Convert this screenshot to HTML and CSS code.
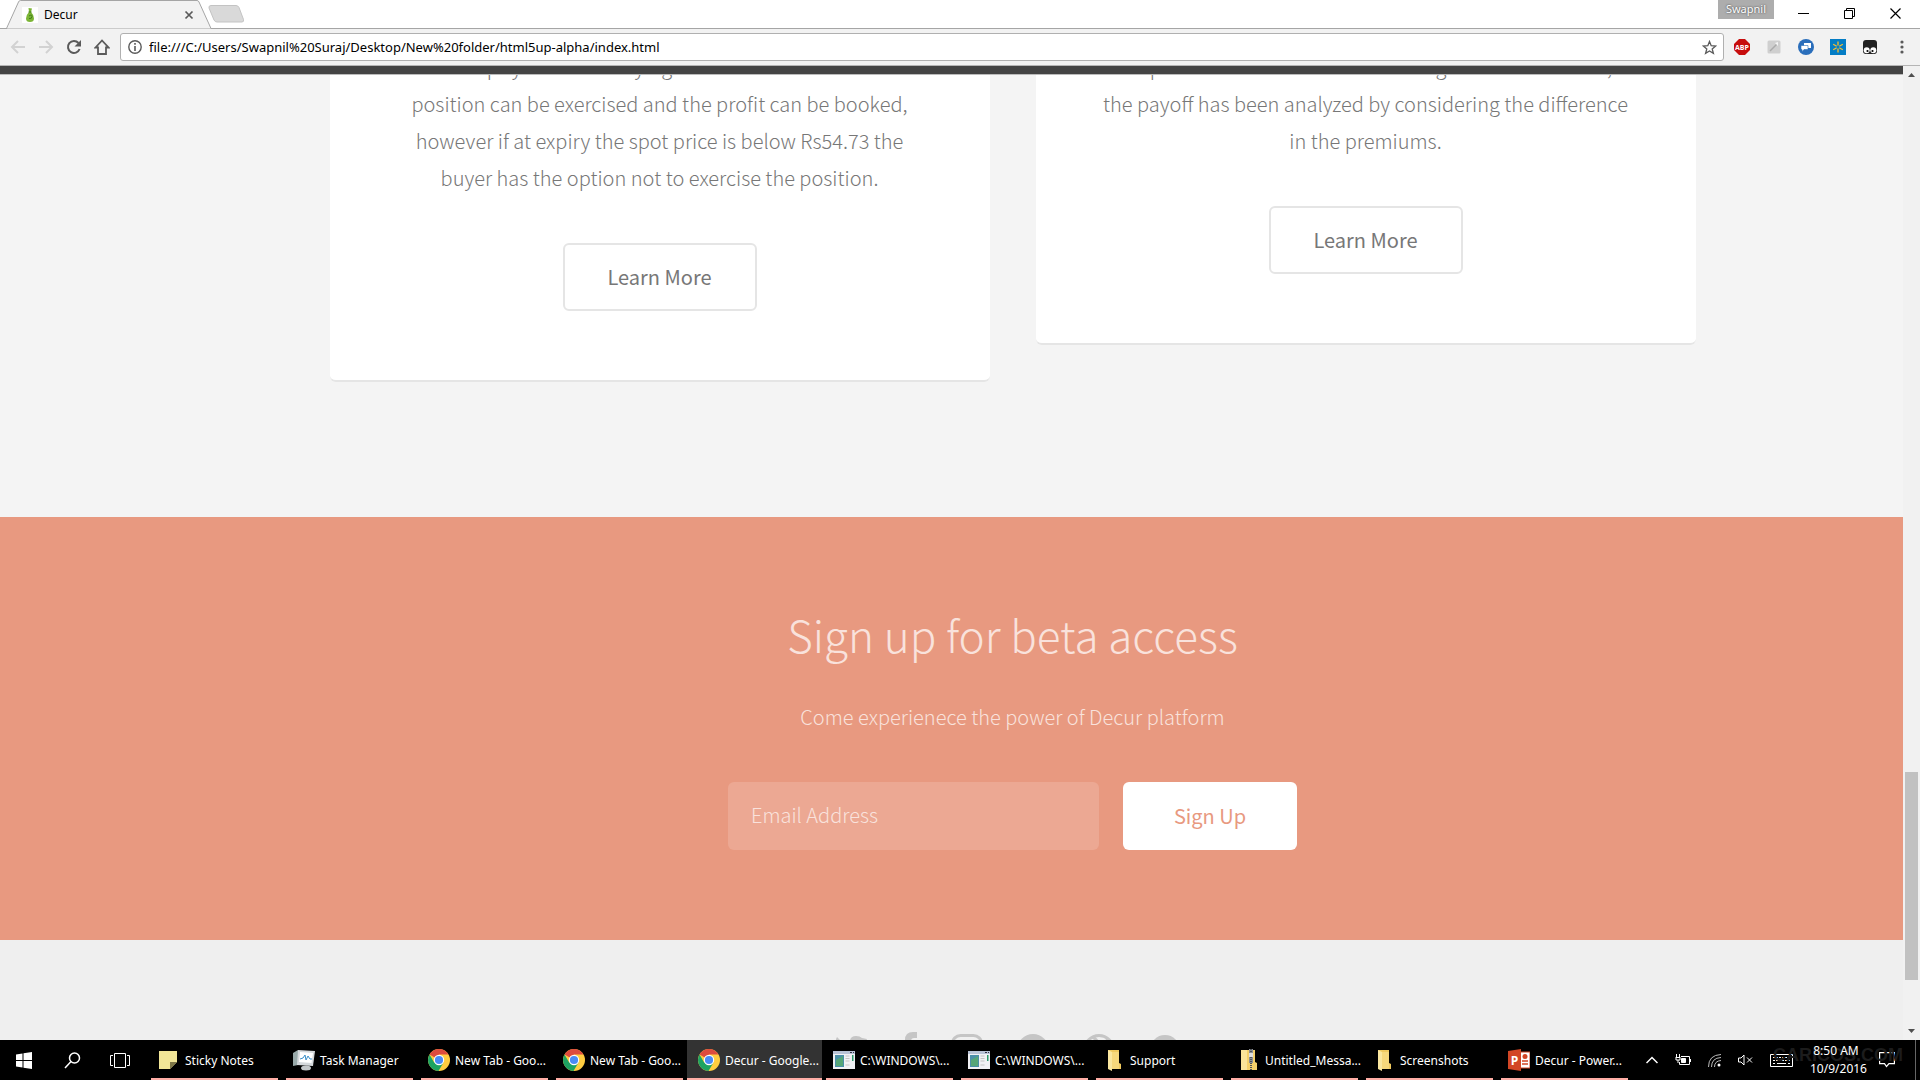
FILE: index.html
```html
<!DOCTYPE html>
<html lang="en">
<head>
<meta charset="UTF-8">
<meta name="viewport" content="width=device-width, initial-scale=1">
<title>Decur</title>
<link rel="stylesheet" href="styles.css">
</head>
<body>
<!-- shared icons -->
<svg class="defs" width="0" height="0" aria-hidden="true">
    <symbol id="chrome" viewBox="0 0 22 22">
        <circle cx="11" cy="11" r="11" fill="#ffcd40"/>
        <path d="M11 11 1.5 5.5A11 11 0 0 1 20.500 5.500H11z" fill="#dd4b3e"/>
        <path d="M1.500 5.500A11 11 0 0 0 10.500 22L15.500 13.500 11 11 6.300 13.800z" fill="#1da362"/>
        <circle cx="11" cy="11" r="5.200" fill="#fff"/>
        <circle cx="11" cy="11" r="4.100" fill="#4a8bf5"/>
    </symbol>
    <symbol id="console" viewBox="0 0 22 22">
        <path d="M0 2h22v18H0z" fill="#f1f1f4"/>
        <path d="M0 2h22v3H0z" fill="#b9c3d6"/>
        <path d="M17 3h2v1h-2zM20 3h1v1h-1z" fill="#334"/>
        <path d="M2 6h9v12H2z" fill="#4b8fa8"/>
        <path d="M3 11 10 7v10H3z" fill="#56a677"/>
        <path d="M12.500 7h4M12.500 9.500h4M12.500 12h4M12.500 16h4" stroke="#c3c3c3"/>
        <path d="M19 6h1.500v6H19z" fill="#2d9b6c"/>
    </symbol>
    <symbol id="folder" viewBox="0 0 22 22">
        <path d="M5 1h11v13l2 1v5H5z" fill="#f0c95e"/>
        <path d="M5 1 9 3v19l-4-2z" fill="#fbe7a0"/>
        <path d="M9 3h7v17H9z" fill="#f7d87c"/>
    </symbol>
</svg>

<header class="browser">
    <div class="tabstrip">
        <div class="tab">
            <svg class="tab-shape" width="207" height="29" viewBox="0 0 207 29"><path d="M0 28.500h2L13.500 2q.6-1.500 2-1.500H192q1.400 0 2 1.500l12 26.500z" fill="#f2f2f2"/><path d="M0 28.500h1.500L13.500 2q.6-1.500 2-1.500H192q1.400 0 2 1.500L206 28.500" fill="none" stroke="#a5a5a5"/></svg>
            <svg class="favicon" width="16" height="16" viewBox="0 0 16 16"><path d="M0 0h16v16H0z" fill="#fff"/><path d="M6.500 1 10 1.500 9 5q3 3 3 6.500Q12 15 8 15t-4-3.500Q4 8 7 5z" fill="#7cb536"/><path d="M6.500 5h3M7 9q3-2 3 .5t-3 2" stroke="#3f7d1a" fill="none"/></svg>
            <span class="tab-title">Decur</span>
            <button class="tab-close" aria-label="Close tab"><svg width="10" height="10" viewBox="0 0 10 10"><path d="m1.500 1.500 7 7m0-7-7 7" stroke="#5a5a5a" stroke-width="1.700"/></svg></button>
        </div>
        <button class="new-tab" aria-label="New tab"><svg width="36" height="18" viewBox="0 0 36 18"><path d="M3 .5h25q2 0 3 2l4.500 12q.5 2.500-1.500 2.500H9q-2 0-3-2L1 3Q.5.500 3 .5z" fill="#d9d9d9" stroke="#c3c3c3"/></svg></button>
        <div class="window-buttons">
            <span class="profile">Swapnil</span>
            <button aria-label="Minimize"><svg width="11" height="11" viewBox="0 0 11 11"><path d="M0 5.500h11" stroke="#000"/></svg></button>
            <button aria-label="Restore"><svg width="11" height="11" viewBox="0 0 11 11"><path d="M.5 2.500h8v8h-8zM2.500 2.500v-2h8v8h-2" fill="none" stroke="#000"/></svg></button>
            <button aria-label="Close"><svg width="11" height="11" viewBox="0 0 11 11"><path d="m.5.500 10 10m0-10-10 10" stroke="#000" stroke-width="1.200"/></svg></button>
        </div>
    </div>
    <div class="toolbar">
        <div class="nav-buttons">
            <button aria-label="Back"><svg width="16" height="16" viewBox="0 0 16 16"><path d="M15 8H2m6-6L2 8l6 6" fill="none" stroke="#d2d2d2" stroke-width="2"/></svg></button>
            <button aria-label="Forward"><svg width="16" height="16" viewBox="0 0 16 16"><path d="M1 8h13M8 2l6 6-6 6" fill="none" stroke="#d2d2d2" stroke-width="2"/></svg></button>
            <button aria-label="Reload"><svg width="16" height="16" viewBox="0 0 16 16"><path d="M13.600 10A6 6 0 1 1 12.500 4" fill="none" stroke="#5a5a5a" stroke-width="2"/><path d="M15 1v6.500H8.500z" fill="#5a5a5a"/></svg></button>
            <button aria-label="Home"><svg width="16" height="16" viewBox="0 0 16 16"><path d="M1.500 8.500 8 1.500l6.500 7H12V15H4V8.500z" fill="none" stroke="#5a5a5a" stroke-width="1.800"/></svg></button>
        </div>
        <div class="omnibox">
            <svg width="14" height="14" viewBox="0 0 14 14"><circle cx="7" cy="7" r="6.200" fill="none" stroke="#5a5a5a" stroke-width="1.400"/><path d="M6.200 6h1.600v5H6.200zM6.200 3h1.600v1.700H6.200z" fill="#5a5a5a"/></svg>
            <input class="url" type="text" aria-label="Address" value="file:///C:/Users/Swapnil%20Suraj/Desktop/New%20folder/html5up-alpha/index.html">
            <svg width="15" height="15" viewBox="0 0 15 15"><path d="m7.500 1.500 1.700 4.200 4.500.3-3.500 2.900 1.200 4.500-3.900-2.500-3.900 2.500 1.200-4.500L1.300 6l4.500-.3z" fill="none" stroke="#5a5a5a" stroke-width="1.300"/></svg>
        </div>
        <div class="extensions">
            <svg width="16" height="16" viewBox="0 0 16 16"><path d="M5 0h6l5 5v6l-5 5H5l-5-5V5z" fill="#c70d0d"/><text x="8" y="11" text-anchor="middle" class="abp">ABP</text></svg>
            <svg width="16" height="16" viewBox="0 0 16 16"><rect x="1.500" y="1.500" width="13" height="13" rx="1.500" fill="#cfcfcf"/><path d="m4 12 7-7" stroke="#aaa" stroke-width="1.500"/><path d="m9 4 3-1v4z" fill="#f5f5f5"/></svg>
            <svg width="16" height="16" viewBox="0 0 16 16"><circle cx="8" cy="8" r="8" fill="#2a6ebb"/><path d="M6 4h7v5H6z" fill="#fff"/><path d="M3 6.500h7v4H6L4 12.500v-2H3z" fill="#fff" stroke="#2a6ebb" stroke-width=".6"/></svg>
            <svg width="16" height="16" viewBox="0 0 16 16"><path d="M0 0h16v16H0z" fill="#047dc5"/><path d="M8 2.500v4M8 9.500v4M3.200 5.200l3.500 2M9.300 8.800l3.500 2M3.200 10.800l3.500-2M9.300 7.200l3.500-2" stroke="#fbbe2c" stroke-width="1.300"/></svg>
            <svg width="16" height="16" viewBox="0 0 16 16"><rect x="1" y="1" width="14" height="14" rx="3" fill="#222"/><circle cx="4.700" cy="11.300" r="3" fill="#fff"/><circle cx="11.300" cy="11.300" r="3" fill="#fff"/><circle cx="5.500" cy="12" r="1.100"/><circle cx="10.500" cy="12" r="1.100"/></svg>
            <svg width="16" height="16" viewBox="0 0 16 16" fill="#5a5a5a"><circle cx="8" cy="3" r="1.600"/><circle cx="8" cy="8" r="1.600"/><circle cx="8" cy="13" r="1.600"/></svg>
        </div>
    </div>
</header>

<div class="viewport">
    <div class="page">
        <div class="page-header"></div>
        <main class="main">
            <section class="box">
                <p>At the expiry if the underlying asset is above Rs54.73 the<br>position can be exercised and the profit can be booked,<br>however if at expiry the spot price is below Rs54.73 the<br>buyer has the option not to exercise the position.</p>
                <a class="button alt" href="#">Learn More</a>
            </section>
            <section class="box">
                <p>In spread is made of trades involving the two contracts,<br>the payoff has been analyzed by considering the difference<br>in the premiums.</p>
                <a class="button alt" href="#">Learn More</a>
            </section>
        </main>
        <section class="cta">
            <h2>Sign up for beta access</h2>
            <p>Come experienece the power of Decur platform</p>
            <form class="cta-form">
                <input type="email" aria-label="Email Address" placeholder="Email Address">
                <button class="button" type="submit">Sign Up</button>
            </form>
        </section>
        <footer class="footer">
            <a href="#" aria-label="Twitter"><svg width="36" height="30" viewBox="0 0 36 30"><path d="M34 4q-1 3-3 4Q31 27 12 28q-6 0-10-3 6 0 9-3-5-1-6-5h3Q3 15 3 10l3 1Q1 7 4 2q6 7 13 7-1-8 6-8 4 0 6 2z" fill="#c5c5c5"/></svg></a>
            <a href="#" aria-label="Facebook"><svg width="14" height="36" viewBox="0 0 14 36"><path d="M14 0v6h-3q-3 0-3 3v5h6l-1 6H8v16H2V20h-2v-6h2V8q0-8 8-8z" fill="#c5c5c5"/></svg></a>
            <a href="#" aria-label="Instagram"><svg width="32" height="32" viewBox="0 0 32 32" fill="none" stroke="#c5c5c5" stroke-width="3"><rect x="1.500" y="1.500" width="29" height="29" rx="8"/><circle cx="16" cy="16" r="7"/></svg></a>
            <a href="#" aria-label="Github"><svg width="32" height="32" viewBox="0 0 32 32"><circle cx="16" cy="16" r="16" fill="#c5c5c5"/></svg></a>
            <a href="#" aria-label="Dribbble"><svg width="32" height="32" viewBox="0 0 32 32" fill="none" stroke="#c5c5c5" stroke-width="3"><circle cx="16" cy="16" r="14.500"/><path d="M10 3q12 10 12 26M2 13q17 1 23-8M5 26q8-13 25-9"/></svg></a>
            <a href="#" aria-label="Google+"><svg width="32" height="32" viewBox="0 0 32 32"><circle cx="16" cy="16" r="15" fill="#c5c5c5"/></svg></a>
        </footer>
    </div>
    <div class="scrollbar">
        <svg width="7" height="4" viewBox="0 0 7 4"><path d="M3.500 0 7 4H0z" fill="#505050"/></svg>
        <div class="scroll-track"><div class="scroll-thumb"></div></div>
        <svg width="7" height="4" viewBox="0 0 7 4"><path d="M3.500 4 7 0H0z" fill="#505050"/></svg>
    </div>
</div>

<footer class="taskbar">
    <button class="sys" aria-label="Start"><svg width="16" height="17" viewBox="0 0 16 17" fill="#fff"><path d="M0 2.500 6.500 1.500V8H0zM7.500 1.300 16 0v8H7.500zM0 9h6.500v6.500L0 14.500zM7.500 9H16v8l-8.500-1.300z"/></svg></button>
    <button class="sys" aria-label="Search"><svg width="17" height="17" viewBox="0 0 17 17" fill="none" stroke="#fff" stroke-width="1.500"><circle cx="10.500" cy="6" r="5"/><path d="m7 9.500-6 6.500"/></svg></button>
    <button class="sys" aria-label="Task View"><svg width="20" height="15" viewBox="0 0 20 15" fill="none" stroke="#fff"><path d="M4.500.5h11v14h-11zM3 2.500H.5v10H3M17 2.500h2.500v10H17"/></svg></button>
    <nav class="tasks">
        <button class="task"><svg class="task-icon" viewBox="0 0 22 22"><path d="M1 2h18v11l-7 7H1z" fill="#f1e597"/><path d="M12 20v-7h7z" fill="#7f7747"/></svg><span>Sticky Notes</span></button>
        <button class="task"><svg class="task-icon" viewBox="0 0 22 22"><path d="M0 4 5 1v15l-5 1z" fill="#9aa"/><path d="m5 1 17 1-2 15L4 16z" fill="#d5d9dc"/><path d="m7 3 13 1-1.500 10L6 13z" fill="#fff"/><path d="m7 10 3-1 2-3 1 5 2-4 2 3h2" fill="none" stroke="#3a8fc9"/><ellipse cx="13" cy="19" rx="5" ry="2.500" fill="#c4c8ca"/></svg><span>Task Manager</span></button>
        <button class="task"><svg class="task-icon"><use href="#chrome"/></svg><span>New Tab - Goo...</span></button>
        <button class="task"><svg class="task-icon"><use href="#chrome"/></svg><span>New Tab - Goo...</span></button>
        <button class="task active"><svg class="task-icon"><use href="#chrome"/></svg><span>Decur - Google...</span></button>
        <button class="task"><svg class="task-icon"><use href="#console"/></svg><span>C:\WINDOWS\...</span></button>
        <button class="task"><svg class="task-icon"><use href="#console"/></svg><span>C:\WINDOWS\...</span></button>
        <button class="task"><svg class="task-icon"><use href="#folder"/></svg><span>Support</span></button>
        <button class="task"><svg class="task-icon" viewBox="0 0 22 22"><path d="M3 1h14v12l2 1v7H3z" fill="#f4d06a"/><path d="M3 1h6v20H3z" fill="#fae49a"/><path d="M11 0h4v14h-4z" fill="#8b8f94"/><path d="M13 0v22" stroke="#50545a" stroke-width="2" stroke-dasharray="1 1"/><path d="M11 4h4v4h-4z" fill="#ddd"/></svg><span>Untitled_Messa...</span></button>
        <button class="task"><svg class="task-icon"><use href="#folder"/></svg><span>Screenshots</span></button>
        <button class="task"><svg class="task-icon" viewBox="0 0 22 22"><path d="M12 3h10v16H12z" fill="#fff" stroke="#d24625"/><path d="M14 12h6M14 15h6" stroke="#d24625" stroke-width="1.500"/><circle cx="17" cy="7.500" r="2.500" fill="#d24625"/><path d="M0 2 13 0v22L0 20z" fill="#d24625"/><text x="6.500" y="15.500" text-anchor="middle" class="ppt">P</text></svg><span>Decur - Power...</span></button>
    </nav>
    <div class="tray">
        <svg width="12" height="8" viewBox="0 0 12 8" fill="none" stroke="#fff" stroke-width="1.500"><path d="m.5 7 5.500-5.500L11.500 7"/></svg>
        <svg width="16" height="12" viewBox="0 0 16 12" fill="none" stroke="#fff"><path d="M6 2.500h8.500v8h-10V8"/><path d="M15.500 5v3"/><path d="M1.500 0v3M4.500 0v3M.5 3.500h5M1 4v2h4V4M3 6v3"/><path d="M6.500 4.500h4v4h-4z" fill="#fff"/></svg>
        <svg width="13" height="13" viewBox="0 0 13 13" fill="none" stroke="#bbb"><path d="M.5 13Q.5 1 13 .5M3.500 13q0-9 9.500-9.500M6.500 13Q6.500 7 13 6.500"/><circle cx="11" cy="11" r="1.500" fill="#fff" stroke="none"/></svg>
        <svg width="15" height="12" viewBox="0 0 15 12" fill="none" stroke="#fff"><path d="M.5 4v4H3l3 3V1L3 4zM9 3.500l5 5m0-5-5 5"/></svg>
        <svg width="23" height="13" viewBox="0 0 23 13" fill="none" stroke="#fff"><path d="M.5.500h22v12H.5z"/><path d="M3 3.500h17M3 6.500h17" stroke-dasharray="2 1"/><path d="M3 9.500h2M7 9.500h9M18 9.500h2"/></svg>
        <div class="clock"><span>8:50 AM</span><span>10/9/2016</span></div>
        <svg width="16" height="16" viewBox="0 0 16 16" fill="none" stroke="#fff" stroke-width="1.200"><path d="M.6.600h14.800v11H10L7.500 14.500 5.500 11.600H.6z"/></svg>
        <span class="watermark">CARICOS.COM</span>
    </div>
</footer>
</body>
</html>
```
FILE: styles.css
```css
* { box-sizing: border-box; margin: 0; padding: 0; }
html, body {
    height: 100%;
}
body {
    display: flex;
    flex-direction: column;
    overflow: hidden;
    background: #f4f4f4;
    font-family: "Noto Sans", "Open Sans", sans-serif;
    font-size: 12px;
    color: #000;
}
button {
    border: 0;
    background: none;
    font: inherit;
    color: inherit;
}
svg {
    display: block;
    flex: none;
}
.defs {
    position: absolute;
}

/* browser */
.browser {
    flex: none;
    background: #f2f2f2;
    border-bottom: 1px solid #b5b5b5;
}
.tabstrip {
    display: flex;
    height: 29px;
    padding-left: 5px;
    background: #fff;
    border-bottom: 1px solid #a5a5a5;
}
.tab {
    position: relative;
    display: flex;
    align-items: center;
    width: 207px;
    height: 29px;
    padding: 0 18px 0 17px;
}
.tab-shape {
    position: absolute;
    top: 0;
    left: 0;
}
.favicon, .tab-title, .tab-close {
    position: relative;
}
.tab-title {
    flex: 1;
    margin-left: 6px;
}
.new-tab {
    align-self: center;
    margin-left: -4px;
}
.window-buttons {
    display: flex;
    align-items: center;
    height: 26px;
    margin-left: auto;
    padding-right: 2px;
}
.window-buttons button {
    display: flex;
    justify-content: center;
    width: 46px;
}
.profile {
    align-self: flex-start;
    width: 56px;
    height: 19px;
    margin-right: 6px;
    background: #adadad;
    color: #fff;
    font-size: 11px;
    line-height: 18px;
    text-align: center;
    text-shadow: 0 0 2px #333;
}
.toolbar {
    display: flex;
    align-items: center;
    height: 36px;
    padding: 0 10px;
}
.nav-buttons {
    display: flex;
    gap: 12px;
    margin-right: 10px;
}
.omnibox {
    flex: 1;
    display: flex;
    align-items: center;
    gap: 7px;
    height: 28px;
    padding: 0 6px 0 7px;
    background: #fff;
    border: 1px solid #b0b0b0;
    border-radius: 3px;
}
.url {
    flex: 1;
    border: 0;
    background: none;
    font: 13px "Noto Sans", sans-serif;
}
.extensions {
    display: flex;
    gap: 16px;
    margin-left: 10px;
}
.abp {
    font: bold 7px "Open Sans", sans-serif;
    fill: #fff;
}

/* page */
.viewport {
    flex: 1;
    display: flex;
    min-height: 0;
}
.page {
    position: relative;
    flex: 1;
    min-width: 0;
    overflow: hidden;
    background: #f4f4f4;
    color: #777;
    font-family: "Noto Sans CJK SC", "Open Sans", sans-serif;
    font-size: 20px;
    font-weight: 300;
    line-height: 37px;
    text-align: center;
}
.page-header {
    position: absolute;
    top: 0;
    left: 0;
    right: 0;
    height: 9px;
    background: #444;
    border-bottom: 1px solid #bbb;
}
/* content is wider than the window and runs off to the right */
.main, .cta, .footer {
    width: calc(100% + 122px);
}
.main {
    display: grid;
    grid-template-columns: 660px 660px;
    gap: 46px;
    justify-content: center;
    align-items: start;
    margin-top: -18px;
    padding-bottom: 135px;
}
.box {
    padding-bottom: 69px;
    background: #fff;
    border-bottom: 2px solid #e5e5e5;
    border-radius: 6px;
}
.box p {
    margin-bottom: 47px;
}
.button {
    display: inline-block;
    height: 68px;
    border-radius: 6px;
    background: #fff;
    color: #e89980;
    font-size: 20px;
    font-weight: 400;
    line-height: 64px;
    text-decoration: none;
}
.button.alt {
    width: 194px;
    border: 2px solid #e5e5e5;
    color: #777;
    vertical-align: top;
}
.cta {
    padding: 85px 0 90px;
    background: #e89980;
    color: #f9e2dc;
}
.cta h2 {
    margin-bottom: 32px;
    font-size: 44px;
    font-weight: 300;
    line-height: 64px;
}
.cta p {
    margin-bottom: 47px;
}
.cta-form {
    display: flex;
    justify-content: center;
    gap: 24px;
}
.cta-form input {
    width: 371px;
    height: 68px;
    padding: 0 23px 4px;
    border: 0;
    border-radius: 6px;
    background: #eca893;
    color: #f9e2dc;
    font: inherit;
}
.cta-form input::placeholder {
    color: #f9e2dc;
    opacity: 1;
}
.cta-form .button {
    width: 174px;
}
.footer {
    display: flex;
    align-items: center;
    justify-content: center;
    gap: 34px;
    padding: 92px 12px 72px 0;
    background: #efefef;
}
.scrollbar {
    flex: none;
    display: flex;
    flex-direction: column;
    align-items: center;
    width: 17px;
    padding: 7px 0;
    background: #f1f1f1;
}
.scroll-track {
    flex: 1;
    display: flex;
    flex-direction: column;
    justify-content: flex-end;
    width: 13px;
    padding-bottom: 49px;
}
.scroll-thumb {
    height: 23%;
    background: #c1c1c1;
}

/* taskbar */
.taskbar {
    flex: none;
    display: flex;
    height: 40px;
    background: #000;
    color: #fff;
}
.sys {
    display: flex;
    align-items: center;
    justify-content: center;
    width: 48px;
}
.tasks {
    flex: 1;
    display: flex;
    margin-left: 3px;
}
.task {
    position: relative;
    display: flex;
    align-items: center;
    gap: 5px;
    width: 135px;
    padding: 0 4px 0 11px;
    white-space: nowrap;
}
.task::after {
    content: "";
    position: absolute;
    left: 4px;
    right: 4px;
    bottom: 0;
    height: 2px;
    background: #ffaea6;
}
.task.active {
    background: #333;
}
.task.active::after {
    left: 0;
    right: 0;
}
.task-icon {
    width: 22px;
    height: 22px;
}
.ppt {
    font: bold 12px "Open Sans", sans-serif;
    fill: #fff;
}
.tray {
    position: relative;
    display: flex;
    align-items: center;
    gap: 17px;
    margin-right: 4px;
    padding-right: 20px;
    border-right: 1px solid #666;
}
.clock {
    display: flex;
    flex-direction: column;
    width: 52px;
    line-height: 18px;
    text-align: center;
    z-index: 1;
}
.watermark {
    position: absolute;
    right: 12px;
    bottom: 14px;
    color: #1c1c1c;
    font: bold 18px "Liberation Sans", sans-serif;
}
```
